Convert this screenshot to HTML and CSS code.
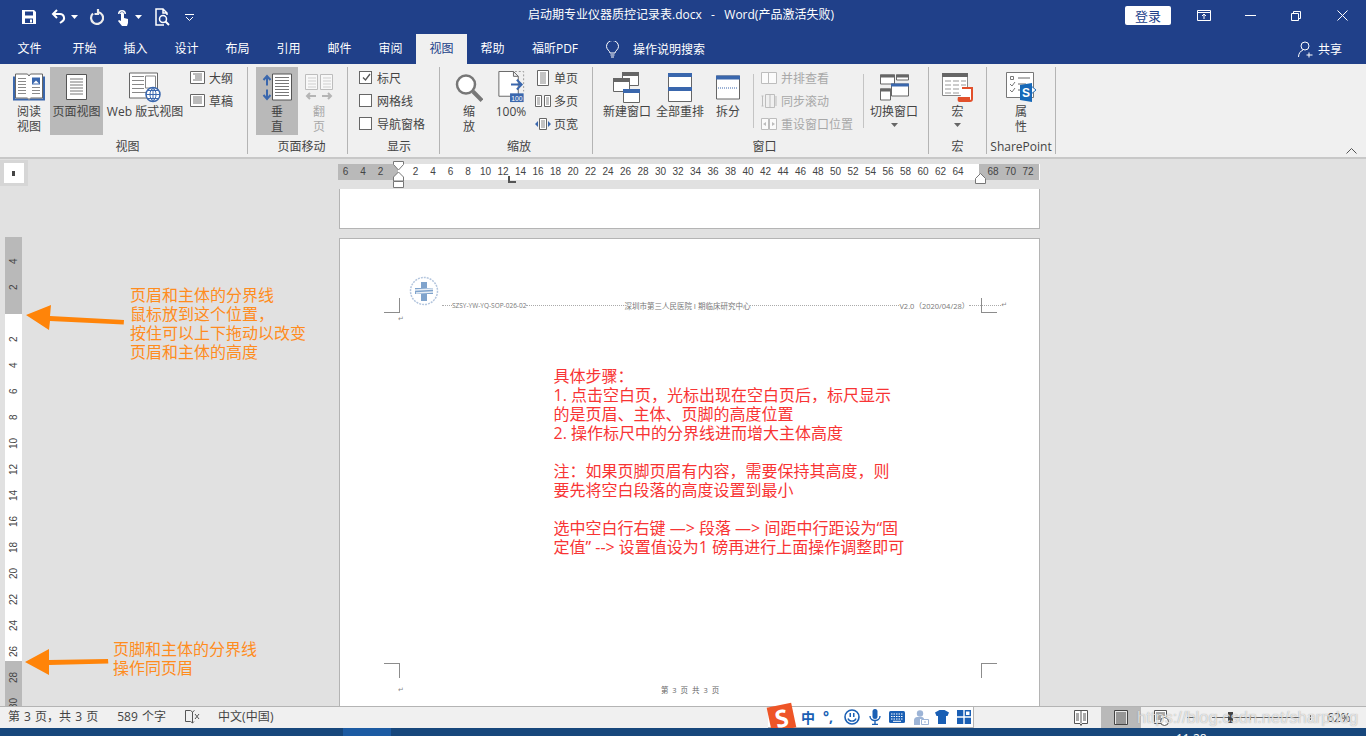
FILE: index.html
```html
<!DOCTYPE html>
<html lang="zh-CN">
<head>
    <meta charset="UTF-8">
    <title>启动期专业仪器质控记录表.docx - Word</title>
    <link rel="stylesheet" href="styles.css">
</head>
<body>
    <header class="titlebar">
        <div class="qat">
            <svg class="qat-save" width="16" height="16" viewBox="0 0 16 16"><path fill="#fff" fill-rule="evenodd" d="M1 1h12l2 2v12H1zM4 2.500v4h8v-4zM4 9.500V14h8V9.500z"/><rect x="9" y="10.500" width="2" height="3" fill="#fff"/></svg>
            <svg class="qat-undo" width="16" height="16" viewBox="0 0 16 16"><path fill="none" stroke="#fff" stroke-width="2" d="M2 5h7a4 4 0 0 1 2 7.500l-2 1.500M6 1L2 5l4 4"/></svg>
            <svg class="qat-caret" width="7" height="4" viewBox="0 0 7 4"><path fill="#fff" d="M0 0h7L3.500 4z"/></svg>
            <svg class="qat-redo" width="15" height="16" viewBox="0 0 15 16"><path fill="none" stroke="#ececec" stroke-width="2.200" d="M9 3a6 6 0 1 1-5 1.500M9 0v5H5.500"/></svg>
            <svg class="qat-touch" width="13" height="17" viewBox="0 0 13 17"><path fill="#fff" d="M4 5a2 2 0 0 1 4 0v4l4 1v4l-1 3H6L2 12l1-1 2 1V5zM2 5a4 4 0 1 1 8 0H8.500a2.500 2.500 0 0 0-5 0z"/></svg>
            <svg class="qat-caret2" width="7" height="4" viewBox="0 0 7 4"><path fill="#fff" d="M0 0h7L3.500 4z"/></svg>
            <svg class="qat-preview" width="16" height="18" viewBox="0 0 16 18"><path fill="none" stroke="#fff" stroke-width="1.500" d="M9 17H1V1h7l4 4v2M8 1v4h4"/><circle cx="8" cy="11" r="3.500" fill="none" stroke="#fff" stroke-width="1.500"/><path stroke="#fff" stroke-width="2" d="M10.500 13.500L14 17"/></svg>
            <svg class="qat-more" width="9" height="7" viewBox="0 0 9 7"><path fill="none" stroke="#fff" d="M0 .5h9M1 3l3.500 3.500L8 3"/></svg>
        </div>
        <div class="doc-title">启动期专业仪器质控记录表.docx &nbsp;&nbsp;-&nbsp;&nbsp; Word(产品激活失败)</div>
        <div class="win-ctrl">
            <button class="login">登录</button>
            <svg class="wc-ribbon" width="14" height="11" viewBox="0 0 14 11"><path fill="none" stroke="#fff" d="M.5.500h13v10H.5zM.5 2.500h13M7 9V4.500M5 6l2-2 2 2"/></svg>
            <svg class="wc-min" width="11" height="1" viewBox="0 0 11 1"><path fill="#fff" d="M0 0h11v1H0z"/></svg>
            <svg class="wc-max" width="10" height="10" viewBox="0 0 10 10"><path fill="none" stroke="#fff" d="M.5 2.500h7v7h-7zM2.500 2.500v-2h7v7h-2"/></svg>
            <svg class="wc-close" width="11" height="11" viewBox="0 0 11 11"><path stroke="#fff" d="M.5.500l10 10M10.500.500l-10 10"/></svg>
        </div>
    </header>

    <nav class="tabs">
        <span class="tab tab-file">文件</span>
        <span class="tab">开始</span>
        <span class="tab">插入</span>
        <span class="tab">设计</span>
        <span class="tab">布局</span>
        <span class="tab">引用</span>
        <span class="tab">邮件</span>
        <span class="tab">审阅</span>
        <span class="tab tab-active">视图</span>
        <span class="tab">帮助</span>
        <span class="tab tab-auto">福昕PDF</span>
        <svg class="bulb" width="13" height="17" viewBox="0 0 13 17"><path fill="none" stroke="#fff" d="M4 12c0-2-3.500-3.500-3.500-6.500a6 6 0 0 1 12 0C12.500 8.500 9 10 9 12zM4.500 14h4M5 16h3"/></svg>
        <span class="search">操作说明搜索</span>
        <span class="share">
            <svg width="15" height="17" viewBox="0 0 15 17"><circle cx="7" cy="5" r="4" fill="none" stroke="#fff"/><path fill="none" stroke="#fff" d="M.5 16c0-3.500 2-6 4.500-7M11 11.500v5M8.500 14h6"/></svg>
            共享
        </span>
    </nav>

    <section class="ribbon">
        <div class="group g-view">
            <div class="group-body">
                <div class="big big-read">
                    <svg class="big-icon" width="32" height="28" viewBox="0 0 32 28"><path fill="#3a67ad" d="M0 3h2v22h12l2 1 2-1h12V3h2v24H0z"/><path fill="#fff" stroke="#666" d="M2.500.500h12l1.500 2 1.500-2h12v24h-12l-1.500 1.500-1.500-1.500h-12z"/><path stroke="#8a8a8a" d="M5 5h8M5 8h8M5 11h8M5 14h8M5 17h8M5 20h8M19 14h8M19 17h8M19 20h8"/><path fill="#3a67ad" d="M19 4h8v7h-8z"/><path fill="#fff" d="M20 10l3-3 3 3z"/></svg>
                    <span>阅读<br>视图</span>
                </div>
                <div class="big big-active big-page">
                    <svg class="big-icon" width="22" height="27" viewBox="0 0 22 27"><path fill="#fff" stroke="#555" d="M.5.500h20v25H.5z"/><path stroke="#777" d="M4 5h13M4 8h13M4 11h13M4 14h13M4 17h13M4 20h13"/></svg>
                    <span>页面视图</span>
                </div>
                <div class="big big-web">
                    <svg class="big-icon" width="32" height="30" viewBox="0 0 32 30"><path fill="#fff" stroke="#666" d="M.5.500h28v25H.5z"/><path stroke="#888" d="M3 4h12M3 8h12M3 12h12M3 16h12M3 20h14"/><path fill="#fff" stroke="#888" d="M16.500 3.500h10v12h-10z"/><circle cx="24" cy="22" r="7" fill="#fff" stroke="#3a67ad" stroke-width="1.500"/><path fill="none" stroke="#3a67ad" d="M17 22h14M24 15v14M18.500 18h11M18.500 26h11M24 15c-4 4-4 10 0 14M24 15c4 4 4 10 0 14"/></svg>
                    <span>Web 版式视图</span>
                </div>
                <div class="small-col col-outline">
                    <div class="small"><svg width="15" height="13" viewBox="0 0 15 13"><path fill="#fff" stroke="#666" d="M.5.500h14v12H.5z"/><path stroke="#777" d="M3 3h9M5 5h7M5 7h7M3 9h9"/></svg>大纲</div>
                    <div class="small"><svg width="15" height="13" viewBox="0 0 15 13"><path fill="#fff" stroke="#666" d="M.5.500h14v12H.5z"/><path stroke="#777" d="M3 3h9M3 5h9M3 7h9M3 9h9"/></svg>草稿</div>
                </div>
            </div>
            <div class="group-label">视图</div>
        </div>

        <div class="group g-move">
            <div class="group-body">
                <div class="big big-active big-vert">
                    <svg class="big-icon" width="30" height="28" viewBox="0 0 30 28"><path stroke="#3a67ad" stroke-width="2" fill="none" d="M5 3v9M5 16v9M1.500 6.500L5 2.500l3.500 4M1.500 21.500L5 25.500l3.500-4"/><path fill="#fff" stroke="#555" d="M10.500.500h19v26h-19z"/><path stroke="#777" d="M13 4h14M13 7h14M13 10h14M13 13h14M13 16h14M13 19h14M13 22h14"/></svg>
                    <span>垂<br>直</span>
                </div>
                <div class="big big-flip is-off">
                    <svg class="big-icon" width="28" height="27" viewBox="0 0 28 27"><path fill="#f8f8f8" stroke="#bdbdbd" d="M.5.500h12v15H.5zM15.500.500h12v15h-12z"/><path stroke="#cfcfcf" d="M3 4h8M3 7h8M3 10h8M3 13h8M18 4h8M18 7h8M18 10h8M18 13h8"/><path fill="none" stroke="#b5b5b5" stroke-width="2" d="M2 22h9M17 22h9M5 19l-3 3 3 3M23 19l3 3-3 3"/></svg>
                    <span>翻<br>页</span>
                </div>
            </div>
            <div class="group-label">页面移动</div>
        </div>

        <div class="group g-show">
            <div class="group-body">
                <div class="small-col col-show">
                    <div class="small"><span class="check"><svg width="11" height="11" viewBox="0 0 11 11"><path fill="none" stroke="#555" stroke-width="1.300" d="M2 5.500l2.500 2.500L9 2"/></svg></span>标尺</div>
                    <div class="small"><span class="check"></span>网格线</div>
                    <div class="small"><span class="check"></span>导航窗格</div>
                </div>
            </div>
            <div class="group-label">显示</div>
        </div>

        <div class="group g-zoom">
            <div class="group-body">
                <div class="big big-zoom">
                    <svg class="big-icon" width="28" height="28" viewBox="0 0 28 28"><circle cx="11" cy="11" r="9" fill="#fff" stroke="#777" stroke-width="2.500"/><path stroke="#777" stroke-width="4" d="M18 18l9 9"/></svg>
                    <span>缩<br>放</span>
                </div>
                <div class="big big-100">
                    <svg class="big-icon" width="27" height="34" viewBox="0 0 27 34"><path fill="#fff" stroke="#666" d="M.5.500h15l5 5V26H.5zM15.500.500v5h5"/><path fill="none" stroke="#999" stroke-dasharray="2 2" d="M17 .500h9V21"/><path fill="none" stroke="#3a67ad" stroke-width="2" d="M13 14h11M19 9l5 5-5 5"/><rect x="12" y="23" width="14" height="9" fill="#3a67ad"/><text x="19" y="30.500" class="tiny-100">100</text></svg>
                    <span>100%</span>
                </div>
                <div class="small-col col-pages">
                    <div class="small"><svg class="icon-narrow" width="12" height="16" viewBox="0 0 12 16"><path fill="#fff" stroke="#666" d="M.5.500h11v15H.5z"/><path stroke="#888" d="M3 3h6M3 5h6M3 7h6M3 9h6M3 11h6M3 13h6"/></svg>单页</div>
                    <div class="small"><svg width="16" height="12" viewBox="0 0 16 12"><path fill="#fff" stroke="#666" d="M.5.500h6v11h-6zM9.500.500h6v11h-6z"/><path stroke="#888" d="M2 3h3M2 5h3M2 7h3M2 9h3M11 3h3M11 5h3M11 7h3M11 9h3"/></svg>多页</div>
                    <div class="small"><svg width="16" height="12" viewBox="0 0 16 12"><path fill="#fff" stroke="#666" d="M4.500.500h7v11h-7z"/><path stroke="#888" d="M6 3h4M6 5h4M6 7h4M6 9h4"/><path fill="#3a67ad" d="M0 6l3-3v6zM16 6l-3-3v6z"/></svg>页宽</div>
                </div>
            </div>
            <div class="group-label">缩放</div>
        </div>

        <div class="group g-window">
            <div class="group-body">
                <div class="big big-new">
                    <svg class="big-icon" width="28" height="31" viewBox="0 0 28 31"><path fill="#fff" stroke="#666" d="M9.500.500h16v13h-16z"/><path fill="#666" d="M9 0h17v4H9z"/><path fill="#fff" stroke="#666" d="M.5 6.500h16v13H.5z"/><path fill="#666" d="M0 6h17v4H0z"/><path fill="#fff" stroke="#666" d="M10.500 17.500h16v13h-16z"/><path fill="#3a67ad" d="M10 17h17v4H10z"/></svg>
                    <span>新建窗口</span>
                </div>
                <div class="big big-all">
                    <svg class="big-icon" width="24" height="29" viewBox="0 0 24 29"><path fill="#fff" stroke="#666" d="M.5.500h23v28H.5z"/><path fill="#3a67ad" d="M0 0h24v4H0zM0 14h24v4H0z"/></svg>
                    <span>全部重排</span>
                </div>
                <div class="big big-split">
                    <svg class="big-icon" width="24" height="24" viewBox="0 0 24 24"><path fill="#fff" stroke="#666" d="M.5.500h23v23H.5z"/><path fill="#3a67ad" d="M0 0h24v4H0z"/><path stroke="#3a67ad" stroke-dasharray="1 1" d="M2 12.500h20"/></svg>
                    <span>拆分</span>
                </div>
                <div class="rule"></div>
                <div class="small-col col-sync is-off">
                    <div class="small"><svg width="16" height="12" viewBox="0 0 16 12"><path fill="#fbfbfb" stroke="#bdbdbd" d="M.5.500h7v11h-7zM7.500.500h8v11h-8z"/></svg>并排查看</div>
                    <div class="small"><svg width="16" height="14" viewBox="0 0 16 14"><path fill="none" stroke="#bdbdbd" d="M1.500 2v10M.5 2h2M.5 12h2M4.500.500h9v13h-9zM9 .500v13M15 2v10"/></svg>同步滚动</div>
                    <div class="small"><svg width="16" height="12" viewBox="0 0 16 12"><path fill="#fbfbfb" stroke="#bdbdbd" d="M.5.500h7v11h-7zM8.500.500h7v11h-7z"/><path fill="#bdbdbd" d="M2 6l3-2v4zM14 6l-3-2v4z"/></svg>重设窗口位置</div>
                </div>
                <div class="rule rule-b"></div>
                <div class="big big-switch">
                    <svg class="big-icon" width="29" height="26" viewBox="0 0 29 26"><path fill="#fff" stroke="#666" d="M.5.500h14v9H.5zM16.500.500h12v5h-12zM.5 14.500h10v11H.5z"/><path fill="#666" d="M0 0h15v3H0zM16 0h13v3H16zM0 14h11v3H0z"/><path fill="#fff" stroke="#666" d="M11.500 9.500h17v12h-17z"/><path fill="#3a67ad" d="M11 9h18v3H11z"/></svg>
                    <span>切换窗口</span>
                    <svg class="drop" width="7" height="4" viewBox="0 0 7 4"><path fill="#666" d="M0 0h7L3.500 4z"/></svg>
                </div>
            </div>
            <div class="group-label">窗口</div>
        </div>

        <div class="group g-macro">
            <div class="group-body">
                <div class="big big-macro">
                    <svg class="big-icon" width="31" height="29" viewBox="0 0 31 29"><path fill="#fff" stroke="#888" d="M.5.500h25v22H.5z"/><path fill="#666" d="M0 0h26v4H0z"/><path stroke="#999" d="M3 8h6M11 8h6M19 8h5M3 12h6M11 12h6M19 12h5M3 16h6M11 16h6M3 20h6M11 20h6"/><path fill="#fff" stroke="#e2502b" stroke-width="2" d="M20 15h10v11c0 1-1 2-2 2H18"/><path fill="#e2502b" d="M16 24h12v5H18c-2 0-3-1-2-5z"/></svg>
                    <span>宏</span>
                    <svg class="drop" width="7" height="4" viewBox="0 0 7 4"><path fill="#666" d="M0 0h7L3.500 4z"/></svg>
                </div>
            </div>
            <div class="group-label">宏</div>
        </div>

        <div class="group g-share">
            <div class="group-body">
                <div class="big big-props">
                    <svg class="big-icon" width="31" height="31" viewBox="0 0 31 31"><path fill="#fff" stroke="#777" d="M.5.500h27v25H.5z"/><path stroke="#666" d="M12 6h12M12 12h8M12 18h5"/><path fill="none" stroke="#777" d="M4.500 4.500h3v3h-3zM4 12l2 2 3-4M4 18l2 2 3-4"/><path fill="#fff" stroke="#1f6bb5" d="M24 13l6 5-6 5z"/><path fill="#1668b8" d="M14 13l12-2v19l-12-2z"/><text x="20" y="25" class="tiny-s">S</text></svg>
                    <span>属<br>性</span>
                </div>
            </div>
            <div class="group-label">SharePoint</div>
        </div>

        <svg class="collapse" width="11" height="6" viewBox="0 0 11 6"><path fill="none" stroke="#555" d="M.5 5.500l5-5 5 5"/></svg>
    </section>

    <main class="workspace">
        <aside class="side">
            <div class="corner"><i></i></div>
            <div class="vruler">
                <div class="v-grey v-top"><span>4</span><span>2</span></div>
                <div class="v-white">
                    <span>2</span><span>4</span><span>6</span><span>8</span><span>10</span><span>12</span><span>14</span><span>16</span><span>18</span><span>20</span><span>22</span><span>24</span><span>26</span>
                </div>
                <div class="v-grey v-bottom"><span>28</span><span>30</span></div>
            </div>

            <div class="note note-head">页眉和主体的分界线<br>鼠标放到这个位置，<br>按住可以上下拖动以改变<br>页眉和主体的高度</div>
            <svg class="arrow arrow-head" width="100" height="26" viewBox="0 0 100 26"><path fill="#ff8409" d="M0 11L25 1l-1 11 74 4-.3 4.500L24 17l-1 9z"/></svg>
            <div class="note note-foot">页脚和主体的分界线<br>操作同页眉</div>
            <svg class="arrow arrow-foot" width="84" height="26" viewBox="0 0 84 26"><path fill="#ff8409" d="M0 13L24 0v11l59-1 .3 4.500L24 16v10z"/></svg>
        </aside>

        <div class="sheet">
            <div class="hruler">
                <div class="h-grey h-left"><span>6</span><span>4</span><span>2</span></div>
                <div class="h-white">
                    <span>2</span><span>4</span><span>6</span><span>8</span><span>10</span><span>12</span><span>14</span><span>16</span><span>18</span><span>20</span><span>22</span><span>24</span><span>26</span><span>28</span><span>30</span><span>32</span><span>34</span><span>36</span><span>38</span><span>40</span><span>42</span><span>44</span><span>46</span><span>48</span><span>50</span><span>52</span><span>54</span><span>56</span><span>58</span><span>60</span><span>62</span><span>64</span>
                </div>
                <div class="h-grey h-right"><span>68</span><span>70</span><span>72</span></div>
                <svg class="marker-left" width="11" height="27" viewBox="0 0 11 27"><path fill="#fff" stroke="#777" d="M.5.500h10v3L5.500 9 .5 3.500zM5.500 11l5 5v4h-10v-4zM.5 20.500h10v6H.5z"/></svg>
                <svg class="marker-right" width="11" height="11" viewBox="0 0 11 11"><path fill="#fff" stroke="#777" d="M5.500.500l5 5v5H.5v-5z"/></svg>
                <svg class="marker-tab" width="8" height="7" viewBox="0 0 8 7"><path fill="none" stroke="#555" stroke-width="2" d="M1 0v6h7"/></svg>
            </div>

            <div class="page-stub"></div>

            <article class="page">
                <span class="crop crop-tl"></span>
                <span class="crop crop-tr"></span>
                <span class="crop crop-bl"></span>
                <span class="crop crop-br"></span>
                <svg class="logo" width="30" height="30" viewBox="0 0 30 30"><circle cx="15" cy="15" r="13.500" fill="#fff" stroke="#b4c6de" stroke-width="1.500" stroke-dasharray="2 1"/><path fill="#7fa3cc" d="M12 6h6v6h6v6h-6v7h-6v-7H6v-6h6z"/><path stroke="#e6edf5" stroke-width="1.500" d="M6 14l18-1M7 17l17-1"/></svg>
                <div class="run-head">
                    <i></i><span>SZSY-YW-YQ-SOP-026-02</span><i class="leader-a"></i><span class="run-wide">深圳市第三人民医院 I 期临床研究中心</span><i class="leader-b"></i><span class="run-wide">V2.0（2020/04/28）</span><i class="leader-end"></i><b>↵</b>
                </div>
                <div class="para-mark">↵</div>
                <div class="steps">
                    <p>具体步骤：</p>
                    <p>1. 点击空白页，光标出现在空白页后，标尺显示</p>
                    <p>的是页眉、主体、页脚的高度位置</p>
                    <p>2. 操作标尺中的分界线进而增大主体高度</p>
                    <p>&nbsp;</p>
                    <p>注：如果页脚页眉有内容，需要保持其高度，则</p>
                    <p>要先将空白段落的高度设置到最小</p>
                    <p>&nbsp;</p>
                    <p>选中空白行右键 —&gt; 段落 —&gt; 间距中行距设为“固</p>
                    <p>定值” --&gt; 设置值设为1 磅再进行上面操作调整即可</p>
                </div>
                <div class="run-foot"><b>↵</b><span>第 3 页 共 3 页</span></div>
            </article>
        </div>
    </main>

    <footer class="statusbar">
        <span class="st-pages">第 3 页，共 3 页</span>
        <span class="st-words">589 个字</span>
        <svg class="st-proof" width="15" height="15" viewBox="0 0 15 15"><path fill="none" stroke="#555" d="M.5 1.500h5l2 1.500v11l-2-1.500h-5zM7.500 3l2-1.500M9 12.500l-1.500 1.500M10 5l4 5M14 5l-4 5"/></svg>
        <span class="st-lang">中文(中国)</span>

        <div class="st-views">
            <svg class="view-read" width="14" height="16" viewBox="0 0 14 16"><path fill="#fff" stroke="#555" d="M.5.500h13v13H8l-1 2-1-2H.5z"/><path stroke="#555" d="M7 1v12M2 4h3M2 6h3M2 8h3M2 10h3M9 4h3M9 6h3M9 8h3M9 10h3"/></svg>
            <div class="view-on"><svg width="14" height="15" viewBox="0 0 14 15"><path fill="#e8e8e8" stroke="#444" d="M.5.500h13v14H.5z"/><path stroke="#444" d="M2 3h10M2 5h10M2 7h10M2 9h10M2 11h10M2 13h10"/></svg></div>
            <svg class="view-web" width="15" height="16" viewBox="0 0 15 16"><path fill="#fff" stroke="#555" d="M.5.500h12v13H.5z"/><path stroke="#555" d="M2 3h9M2 5h9M2 7h5M2 9h5"/><circle cx="10.500" cy="11.500" r="4" fill="#fff" stroke="#555"/></svg>
            <div class="zoom-slider"><i class="minus"></i><i class="track"></i><i class="thumb"></i><i class="mid"></i><i class="plus"></i></div>
            <span class="zoom-pct">62%</span>
        </div>

        <div class="ime">
            <span class="ime-logo"><b>S</b></span>
            <b class="ime-zh">中</b>
            <b class="ime-punct">°,</b>
            <svg class="ime-smile" width="16" height="16" viewBox="0 0 16 16"><circle cx="8" cy="8" r="7" fill="none" stroke="#1a5fb4" stroke-width="1.600"/><path fill="#1a5fb4" d="M5.500 4h1.500v4H5.500zM9 4h1.500v4H9z"/><path fill="none" stroke="#1a5fb4" stroke-width="1.400" d="M4 9.500c1 3.500 7 3.500 8 0"/></svg>
            <svg class="ime-mic" width="12" height="16" viewBox="0 0 12 16"><rect x="3.500" y="0" width="5" height="10" rx="2.500" fill="#1a5fb4"/><path fill="none" stroke="#1a5fb4" stroke-width="1.400" d="M1 7c0 6 10 6 10 0M6 12v3M3 15.500h6"/></svg>
            <svg class="ime-keys" width="16" height="12" viewBox="0 0 16 12"><rect width="16" height="12" rx="1.500" fill="#1a5fb4"/><path stroke="#fff" stroke-dasharray="1.500 1" d="M2 3h12M2 5.500h12M2 8h12"/><path stroke="#fff" d="M4 10.300h8"/></svg>
            <svg class="ime-user" width="15" height="15" viewBox="0 0 15 15"><circle cx="6" cy="3.500" r="3.200" fill="#9db4d6"/><path fill="#9db4d6" d="M0 15V10c0-2 2-3 3-3h5c1 0 2 1 2 2H6v6z"/><path fill="#fff" stroke="#9db4d6" d="M7.500 9.500h7v5h-7z"/><path stroke="#9db4d6" d="M11 11v2"/></svg>
            <svg class="ime-shirt" width="14" height="14" viewBox="0 0 14 14"><path fill="#1a5fb4" d="M4.500 0h5L14 2.500 12.500 6H11v8H3V6H1.500L0 2.500z"/></svg>
            <svg class="ime-grid" width="14" height="14" viewBox="0 0 14 14"><path fill="#1a5fb4" d="M0 0h6.300v6.300H0zM7.700 0H14v6.300H7.700zM0 7.700h6.300V14H0zM7.700 7.700H14V14H7.700z"/><path fill="#fff" d="M9 1.500h3.500V5H9z"/></svg>
        </div>
        <div class="watermark">https://blog.csdn.net/sharpdog</div>
    </footer>

    <div class="taskbar">
        <i class="task-on"></i>
        <span class="clock">11:28</span>
    </div>
</body>
</html>
```

FILE: styles.css
```css
* {
    box-sizing: border-box;
}
html, body {
    margin: 0;
    height: 100%;
}
body {
    width: 1366px;
    height: 736px;
    overflow: hidden;
    display: flex;
    flex-direction: column;
    font-family: "Open Sans", "Noto Sans CJK SC", sans-serif;
    font-size: 12px;
    color: #444;
    background: #e1e1e1;
}
svg {
    display: block;
    flex: none;
}

/* title bar */
.titlebar {
    position: relative;
    height: 34px;
    flex: none;
    background: #204089;
    color: #fff;
}
.qat {
    display: flex;
    align-items: center;
    height: 34px;
    padding-left: 21px;
}
.qat-undo { margin-left: 14px; }
.qat-caret { margin-left: 4px; }
.qat-redo { margin-left: 11px; }
.qat-touch { margin-left: 12px; }
.qat-caret2 { margin-left: 6px; }
.qat-preview { margin-left: 13px; }
.qat-more { margin-left: 14px; }
.doc-title {
    position: absolute;
    left: 528px;
    top: 7px;
    line-height: 16px;
    white-space: nowrap;
}
.win-ctrl {
    position: absolute;
    right: 0;
    top: 0;
    height: 34px;
    display: flex;
    align-items: center;
    padding-right: 18px;
}
.login {
    width: 46px;
    height: 19px;
    margin-top: -3px;
    padding: 0;
    border: 0;
    border-radius: 2px;
    background: #fff;
    color: #204089;
    font: inherit;
    font-size: 13px;
}
.wc-ribbon { margin: -3px 0 0 26px; }
.wc-min { margin: -3px 0 0 34px; }
.wc-max { margin: -3px 0 0 35px; }
.wc-close { margin: -3px 0 0 36px; }

/* tabs */
.tabs {
    display: flex;
    align-items: center;
    height: 30px;
    flex: none;
    background: #204089;
    color: #fff;
}
.tab {
    width: 51px;
    height: 30px;
    line-height: 29px;
    text-align: center;
}
.tab-file {
    width: 59px;
}
.tab-active {
    background: #f0f0f0;
    color: #204089;
}
.tab-auto {
    width: 74px;
}
.bulb {
    margin-left: 14px;
}
.search {
    margin-left: 14px;
}
.share {
    margin-left: auto;
    margin-right: 24px;
    display: flex;
    align-items: center;
    gap: 5px;
}

/* ribbon */
.ribbon {
    position: relative;
    display: flex;
    height: 95px;
    flex: none;
    padding-top: 3px;
    background: #f0f0f0;
    border-bottom: 2px solid #c8c8c8;
}
.group {
    display: flex;
    flex-direction: column;
    height: 87px;
    border-right: 1px solid #b4b4b4;
}
.group-body {
    display: flex;
    height: 70px;
}
.group-label {
    padding-top: 4px;
    line-height: 15px;
    text-align: center;
    white-space: nowrap;
}
.g-view { width: 248px; padding-left: 8px; }
.g-move { width: 100px; padding-left: 8px; }
.g-show { width: 92px; padding-left: 11px; }
.g-zoom { width: 153px; padding-left: 6px; }
.g-window { width: 336px; padding-left: 8px; }
.g-macro { width: 58px; }
.g-share { width: 69px; }
.big {
    display: flex;
    flex-direction: column;
    align-items: center;
    padding-top: 4px;
    line-height: 15px;
    text-align: center;
    white-space: nowrap;
}
.big-icon {
    height: 33px;
    align-self: center;
}
.big-active { background: #b9b9b9; }
.big-read { width: 42px; }
.big-page { width: 53px; }
.big-web { width: 80px; margin-left: 2px; }
.big-vert { width: 42px; }
.big-flip { width: 38px; margin-left: 2px; }
.big-zoom { width: 46px; }
.big-100 { width: 38px; }
.big-new { width: 52px; }
.big-all { width: 54px; }
.big-split { width: 42px; }
.big-switch { width: 52px; }
.big-macro { width: 57px; }
.big-props { width: 68px; }
.is-off {
    color: #a8a8a8;
}
.drop {
    margin-top: 4px;
}
.small-col {
    display: flex;
    flex-direction: column;
    margin-top: -1px;
}
.small {
    display: flex;
    align-items: center;
    gap: 4px;
    height: 23px;
    white-space: nowrap;
}
.col-outline { margin-left: 5px; }
.col-pages { margin-left: 5px; }
.col-pages .small { gap: 3px; }
.icon-narrow { margin: 0 2px; }
.col-show .small { gap: 5px; }
.col-sync { width: 100px; }
.check {
    width: 13px;
    height: 13px;
    flex: none;
    padding: 0 0 0 .5px;
    background: #fff;
    border: 1px solid #666;
}
.rule {
    width: 1px;
    height: 54px;
    margin: 7px 7px 0 4px;
    background: #c4c4c4;
}
.rule-b {
    margin: 7px 4px 0 2px;
}
.collapse {
    position: absolute;
    right: 9px;
    top: 84px;
}
.tiny-100 {
    font: 7px "Liberation Sans", sans-serif;
    fill: #fff;
    text-anchor: middle;
}
.tiny-s {
    font: bold 12px "Liberation Sans", sans-serif;
    fill: #fff;
    text-anchor: middle;
}

/* document area */
.workspace {
    flex: 1;
    display: flex;
    min-height: 0;
    overflow: hidden;
}
.side {
    position: relative;
    width: 339px;
    flex: none;
}
.corner {
    width: 28px;
    height: 26px;
    margin-top: 1px;
    padding: 3px 4px;
    background: #d6d6d6;
}
.corner i {
    display: flex;
    width: 20px;
    height: 20px;
    background: #fff;
}
.corner i::after {
    content: "";
    width: 3px;
    height: 5px;
    margin: 8px 0 0 8px;
    background: #444;
}
.vruler {
    width: 17px;
    height: 471px;
    margin: 51px 0 0 5px;
    font: 10px "Liberation Sans", sans-serif;
    overflow: hidden;
}
.vruler span {
    display: flex;
    align-items: center;
    justify-content: center;
    width: 17px;
    height: 26px;
    flex: none;
    writing-mode: vertical-rl;
    transform: rotate(180deg);
}
.v-grey, .v-white {
    display: flex;
    flex-direction: column;
}
.v-grey {
    background: #b9b9b9;
}
.v-top {
    height: 77px;
    padding-bottom: 14px;
    justify-content: flex-end;
}
.v-white {
    height: 347px;
    padding-top: 12px;
    background: #fff;
}
.v-bottom {
    height: 47px;
    padding-top: 3px;
    overflow: hidden;
}
.note {
    position: absolute;
    font-size: 16px;
    line-height: 19px;
    color: #ff8c1e;
    white-space: nowrap;
}
.note-head { left: 130px; top: 127px; }
.note-foot { left: 113px; top: 481px; }
.arrow { position: absolute; }
.arrow-head { left: 26px; top: 145px; }
.arrow-foot { left: 25px; top: 490px; }

.sheet {
    width: 701px;
    flex: none;
    display: flex;
    flex-direction: column;
}
.hruler {
    position: relative;
    display: flex;
    height: 16px;
    flex: none;
    margin: 5px 0 9px -1px;
    font: 10px/16px "Liberation Sans", sans-serif;
    background: #fff;
}
.hruler span {
    width: 17.5px;
    flex: none;
    text-align: center;
}
.h-grey, .h-white {
    display: flex;
}
.h-grey { background: #b9b9b9; }
.h-left {
    width: 60px;
    padding-right: 8.75px;
    justify-content: flex-end;
}
.h-white {
    width: 581px;
    padding-left: 8.75px;
}
.h-right {
    width: 60px;
    padding-left: 5.25px;
}
.marker-left {
    position: absolute;
    left: 55px;
    top: -3px;
}
.marker-right {
    position: absolute;
    left: 637px;
    top: 9px;
}
.marker-tab {
    position: absolute;
    left: 170px;
    top: 12px;
}
.page-stub {
    height: 40px;
    flex: none;
    background: #fff;
    border: 1px solid #b4b4b4;
    border-top: 0;
}
.page {
    position: relative;
    flex: 1;
    margin-top: 9px;
    background: #fff;
    border: 1px solid #b4b4b4;
    border-bottom: 0;
}
.crop {
    position: absolute;
    width: 16px;
    height: 15px;
    border: 0 solid #8c8c8c;
}
.crop-tl { left: 44px; top: 59px; border-width: 0 1px 1px 0; }
.crop-tr { left: 641px; top: 59px; border-width: 0 0 1px 1px; }
.crop-bl { left: 44px; top: 424px; border-width: 1px 1px 0 0; }
.crop-br { left: 641px; top: 424px; border-width: 1px 0 0 1px; }
.logo {
    position: absolute;
    left: 69px;
    top: 37px;
}
.run-head {
    position: absolute;
    left: 102px;
    right: 32px;
    top: 61px;
    display: flex;
    align-items: center;
    height: 10px;
    font-size: 6.5px;
    color: #777;
    white-space: nowrap;
}
.run-wide {
    font-size: 7.5px;
}
.run-head i {
    width: 10px;
    height: 0;
    border-top: 1px dotted #aaa;
}
.run-head i.leader-a {
    width: 98px;
}
.run-head i.leader-b {
    width: 149px;
}
.run-head i.leader-end {
    flex: 1;
}
.run-head b, .run-foot b, .para-mark {
    font-family: "DejaVu Sans", sans-serif;
    font-weight: normal;
    font-size: 7px;
    color: #888;
}
.para-mark {
    position: absolute;
    left: 58px;
    top: 76px;
}
.steps {
    position: absolute;
    left: 213.5px;
    top: 128px;
    font-size: 16px;
    line-height: 19px;
    color: #f83434;
    white-space: nowrap;
}
.steps p {
    margin: 0;
}
.run-foot {
    position: absolute;
    left: 58px;
    top: 445px;
    width: 400px;
    display: flex;
    align-items: center;
    font-size: 7.5px;
    color: #666;
}
.run-foot span {
    margin-left: 257px;
    word-spacing: 2px;
}

/* status bar */
.statusbar {
    position: relative;
    display: flex;
    align-items: center;
    height: 22px;
    flex: none;
    padding-bottom: 3px;
    background: #f0f0f0;
    border-top: 1px solid #b4b4b4;
    white-space: nowrap;
}
.st-pages { margin-left: 8px; word-spacing: 1px; }
.st-words { margin-left: 19px; word-spacing: 1px; }
.st-proof { margin-left: 19px; }
.st-lang { margin-left: 18px; letter-spacing: .1px; }
.st-views {
    position: absolute;
    left: 1074px;
    top: 0;
    height: 21px;
    display: flex;
    align-items: center;
}
.view-on {
    display: flex;
    align-items: center;
    justify-content: center;
    width: 40px;
    height: 21px;
    margin-left: 13px;
    background: #b9b9b9;
}
.view-web { margin-left: 13px; }
.zoom-slider {
    position: relative;
    width: 126px;
    height: 21px;
    margin-left: 18px;
}
.zoom-slider i {
    position: absolute;
    background: #666;
}
.zoom-slider .track { left: 25px; right: 13px; top: 10px; height: 1px; }
.zoom-slider .minus { left: 0; top: 10px; width: 8px; height: 1px; }
.zoom-slider .plus { right: 2px; top: 8px; width: 1px; height: 5px; }
.zoom-slider .thumb { left: 41px; top: 5px; width: 5px; height: 11px; background: #444; }
.zoom-slider .mid { left: 63px; top: 8px; width: 1px; height: 5px; }
.zoom-pct { margin-left: 14px; }
.ime {
    position: absolute;
    left: 768px;
    top: -1px;
    width: 206px;
    height: 22px;
    display: flex;
    align-items: center;
    background: #fff;
    border: 1px solid #b4b4b4;
    border-left: 0;
    color: #1a5fb4;
}
.ime-logo {
    position: absolute;
    left: 1px;
    top: -2px;
    width: 25px;
    height: 25px;
    display: flex;
    align-items: center;
    justify-content: center;
    background: #ee5527;
    transform: rotate(-12deg);
    color: #fff;
}
.ime-logo b {
    font-size: 24px;
    line-height: 25px;
}
.ime-zh {
    margin-left: 33px;
    font-size: 14px;
}
.ime-punct {
    margin-left: 8px;
    width: 14px;
    font-size: 14px;
    line-height: 14px;
}
.ime-smile { margin-left: 7px; }
.ime-mic { margin-left: 9px; }
.ime-keys { margin-left: 8px; }
.ime-user { margin-left: 9px; }
.ime-shirt { margin-left: 6px; }
.ime-grid { margin-left: 8px; }
.watermark {
    position: absolute;
    left: 1137px;
    top: -1px;
    font: 16.5px/22px "Liberation Sans", sans-serif;
    color: rgba(255, 255, 255, .7);
    text-shadow: 0 0 1px rgba(90, 90, 90, .6);
    pointer-events: none;
}

/* taskbar, only its top edge is in the picture */
.taskbar {
    position: relative;
    height: 8px;
    flex: none;
    background: #17477c;
    overflow: hidden;
}
.task-on {
    position: absolute;
    left: 343px;
    top: 0;
    width: 48px;
    height: 8px;
    background: #1c5ba3;
}
.clock {
    position: absolute;
    left: 1176px;
    top: 4px;
    line-height: 14px;
    color: #fff;
}
```
